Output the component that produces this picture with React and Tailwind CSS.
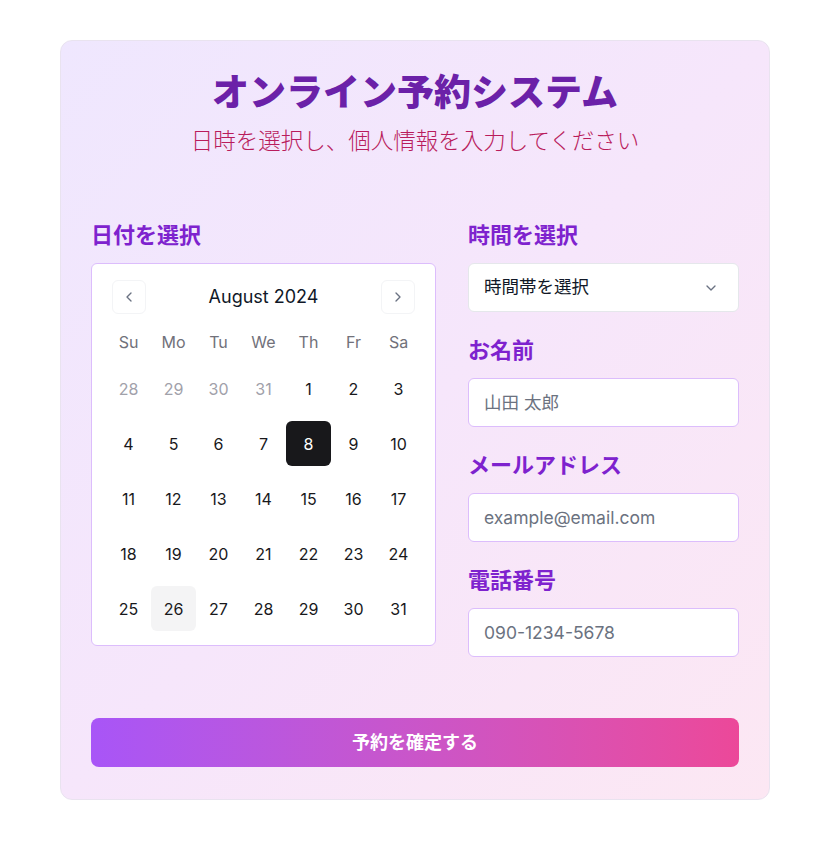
import { ChevronLeft, ChevronRight, ChevronDown } from 'lucide-react';

const weekdays = ['Su', 'Mo', 'Tu', 'We', 'Th', 'Fr', 'Sa'];

const weeks = [
  [28, 29, 30, 31, 1, 2, 3],
  [4, 5, 6, 7, 8, 9, 10],
  [11, 12, 13, 14, 15, 16, 17],
  [18, 19, 20, 21, 22, 23, 24],
  [25, 26, 27, 28, 29, 30, 31],
];

function Calendar() {
  return (
    <div className="bg-white border border-[#dcbdfc] rounded-md pt-4 px-[14px] pb-[14px]">
      <div className="flex items-center justify-between px-1.5">
        <button className="w-[34px] h-[34px] flex items-center justify-center border border-gray-100 rounded-md text-gray-500">
          <ChevronLeft className="w-4 h-4" />
        </button>
        <span className="text-lg font-normal text-gray-900">August 2024</span>
        <button className="w-[34px] h-[34px] flex items-center justify-center border border-gray-100 rounded-md text-gray-500">
          <ChevronRight className="w-4 h-4" />
        </button>
      </div>

      <div className="grid grid-cols-7 mt-4">
        {weekdays.map((d) => (
          <div key={d} className="w-[45px] text-center text-base text-[#71717a] leading-6">
            {d}
          </div>
        ))}
      </div>

      <div className="mt-3 flex flex-col gap-[10px]">
        {weeks.map((week, wi) => (
          <div key={wi} className="grid grid-cols-7">
            {week.map((day, di) => {
              const outside = wi === 0 && day > 7;
              const selected = wi === 1 && day === 8;
              const today = wi === 4 && day === 26;
              let cls = 'text-[#18181b]';
              if (outside) cls = 'text-[#a1a1aa]';
              if (selected) cls = 'bg-[#18181b] text-white';
              if (today) cls = 'bg-[#f4f4f5] text-[#18181b]';
              return (
                <div
                  key={di}
                  className={`w-[45px] h-[45px] flex items-center justify-center rounded-md text-base ${cls}`}
                >
                  {day}
                </div>
              );
            })}
          </div>
        ))}
      </div>
    </div>
  );
}

function Field({ label, placeholder }) {
  return (
    <div>
      <label className="block text-[22px] leading-8 font-bold text-[#7e22ce] mb-3">{label}</label>
      <input
        placeholder={placeholder}
        className="w-full h-[49px] px-[15px] bg-white border border-[#dcbdfc] rounded-md text-[17.5px] text-gray-900 placeholder:text-[#6b7280] outline-none"
      />
    </div>
  );
}

export default function App() {
  return (
    <div className="min-h-screen bg-white font-['Inter','Noto_Sans_CJK_JP',sans-serif] pt-10">
      <div className="w-[710px] ml-[60px] rounded-xl border border-[#e9e3ef] bg-gradient-to-br from-[#efe7fe] via-[#f6e6fb] to-[#fce7f3] px-[30px] py-8">
        {/* Header */}
        <div className="text-center">
          <h1 className="text-[37px] leading-10 font-black text-[#6b21a8]">オンライン予約システム</h1>
          <p className="mt-3 text-[22.5px] leading-8 font-light text-[#b91c5c]">
            日時を選択し、個人情報を入力してください
          </p>
        </div>

        {/* Form */}
        <div className="mt-[62px] flex gap-8">
          <div>
            <h2 className="text-[22px] leading-8 font-bold text-[#7e22ce] mb-3">日付を選択</h2>
            <Calendar />
          </div>

          <div className="flex-1 flex flex-col gap-[22px]">
            <div>
              <h2 className="text-[22px] leading-8 font-bold text-[#7e22ce] mb-3">時間を選択</h2>
              <button className="w-full h-[49px] px-[15px] flex items-center justify-between bg-white border border-gray-200 rounded-md text-[17.5px] text-[#111827]">
                <span>時間帯を選択</span>
                <ChevronDown className="w-4 h-4 mr-1 text-gray-500" />
              </button>
            </div>
            <Field label="お名前" placeholder="山田 太郎" />
            <Field label="メールアドレス" placeholder="example@email.com" />
            <Field label="電話番号" placeholder="090-1234-5678" />
          </div>
        </div>

        <button className="mt-[61px] w-full h-[49px] rounded-lg bg-gradient-to-r from-[#a855f7] to-[#ec4899] text-white text-lg font-bold">
          予約を確定する
        </button>
      </div>
    </div>
  );
}
